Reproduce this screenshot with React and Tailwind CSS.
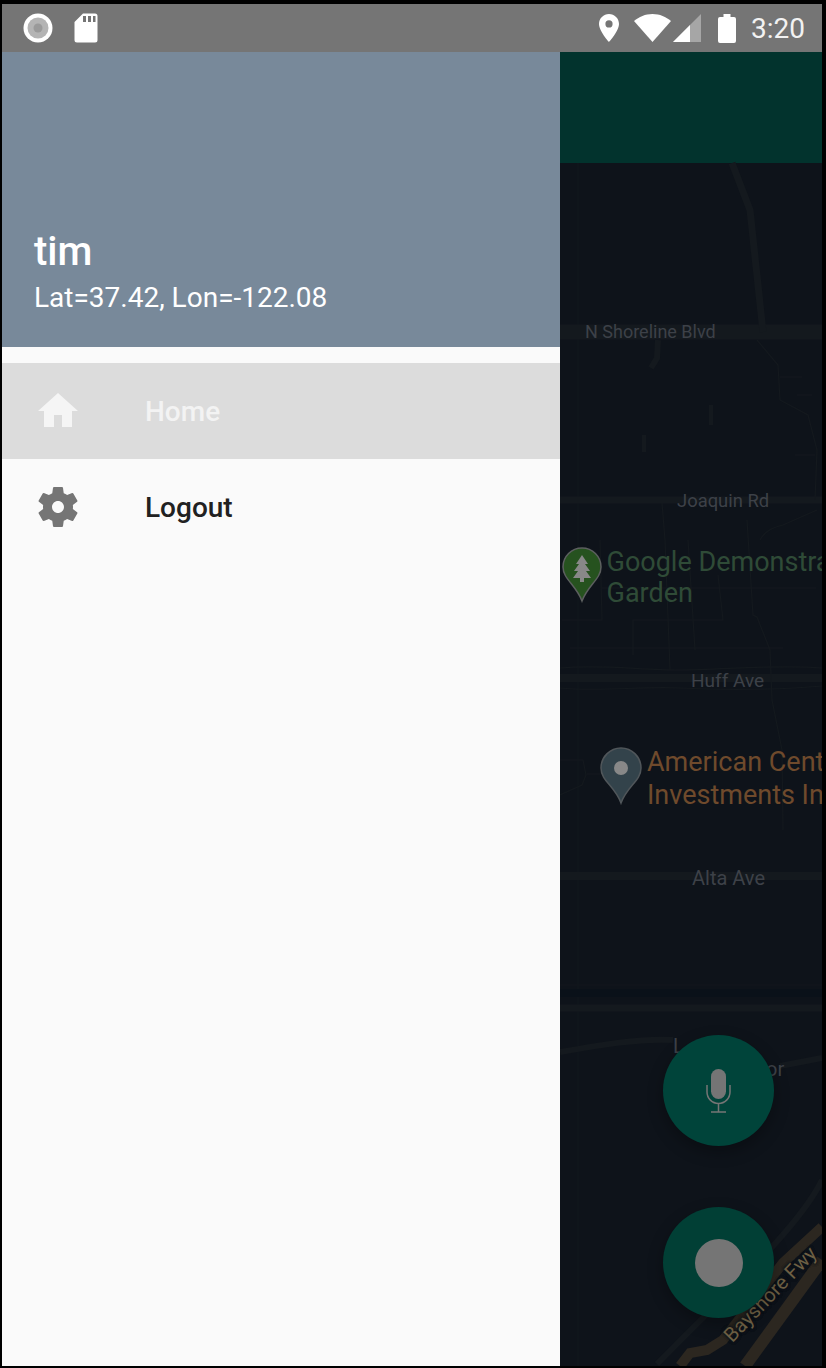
const HOME = "M10 20v-6h4v6h5v-8h3L12 3 2 12h3v8z"
const GEAR = "M19.43 12.98c.04-.32.07-.64.07-.98s-.03-.66-.07-.98l2.11-1.65c.19-.15.24-.42.12-.64l-2-3.46c-.12-.22-.39-.3-.61-.22l-2.49 1c-.52-.4-1.08-.73-1.69-.98l-.38-2.65C14.46 2.18 14.25 2 14 2h-4c-.25 0-.46.18-.49.42l-.38 2.65c-.61.25-1.17.59-1.69.98l-2.49-1c-.23-.09-.49 0-.61.22l-2 3.46c-.13.22-.07.49.12.64l2.11 1.65c-.04.32-.07.65-.07.98s.03.66.07.98l-2.11 1.65c-.19.15-.24.42-.12.64l2 3.46c.12.22.39.3.61.22l2.49-1c.52.4 1.08.73 1.69.98l.38 2.65c.03.24.24.42.49.42h4c.25 0 .46-.18.49-.42l.38-2.65c.61-.25 1.17-.59 1.69-.98l2.49 1c.23.09.49 0 .61-.22l2-3.46c.12-.22.07-.49-.12-.64l-2.11-1.65zM12 15c-1.66 0-3-1.34-3-3s1.34-3 3-3 3 1.34 3 3-1.34 3-3 3z"

const StatusBar = () => (
  <div className="h-12 shrink-0 bg-[#757575] flex items-center text-white">
    <svg width="30" height="30" viewBox="0 0 30 30" className="ml-[21px]">
      <circle cx="15" cy="15" r="14.5" fill="#fff" />
      <circle cx="15" cy="15" r="10.5" fill="#b4b4b4" />
      <circle cx="15" cy="15" r="4.5" fill="#9a9a9a" />
    </svg>
    <svg width="24" height="30" viewBox="0 0 24 30" className="ml-[21px]">
      <path d="M9 .5h12a2.500 2.500 0 0 1 2.500 2.500v24a2.500 2.500 0 0 1-2.500 2.500H3A2.500 2.500 0 0 1 .5 27V9z" fill="#fff" />
      <path d="M9 3h3v6H9zM14 3h3v6h-3zM19 3h2.500v6H19z" fill="#757575" />
    </svg>
    <svg width="20" height="28" viewBox="0 0 20 28" className="ml-[501px]">
      <path d="M10 0C4.500 0 0 4.400 0 10c0 7 10 18 10 18s10-11 10-18c0-5.600-4.500-10-10-10zm0 13.500a3.600 3.600 0 1 1 0-7.200 3.600 3.600 0 0 1 0 7.200z" fill="#fff" />
    </svg>
    <svg width="37" height="28" viewBox="0 0 37 28" className="ml-[15px]">
      <path d="M18.500 28 0 7C5 2.800 11.300 0 18.500 0S32 2.800 37 7z" fill="#fff" />
    </svg>
    <svg width="28" height="28" viewBox="0 0 28 28" className="ml-[2px]">
      <path d="M0 28 28 0v28z" fill="#a6a6a6" />
      <path d="M0 28 17 11v17z" fill="#fff" />
    </svg>
    <svg width="18" height="29" viewBox="0 0 18 29" className="ml-[17px]">
      <path d="M5.500 0h7v3H16a2 2 0 0 1 2 2v22a2 2 0 0 1-2 2H2a2 2 0 0 1-2-2V5a2 2 0 0 1 2-2h3.500z" fill="#fff" />
    </svg>
    <span className="ml-[15px] pt-0.5 text-[28px] leading-none font-['Roboto',sans-serif] text-[#f2f2f2]">3:20</span>
  </div>
)

const Drawer = () => (
  <div className="w-[558px] shrink-0 bg-[#fafafa] font-['Roboto',sans-serif]">
    <div className="h-[295px] bg-[#78899a] flex flex-col justify-end px-8 pb-[33px] text-white">
      <div className="text-[40px] leading-[44px] font-medium mb-[8px]">tim</div>
      <div className="text-[28px] leading-[32px]">Lat=37.42, Lon=-122.08</div>
    </div>
    <div className="pt-4">
      <div className="h-24 bg-[#dcdcdc] flex items-center">
        <svg width="48" height="48" viewBox="0 0 24 24" className="ml-8">
          <path d={HOME} fill="#f5f5f5" />
        </svg>
        <span className="ml-[63px] pt-0.5 text-[28px] font-medium text-[#f3f3f3]">Home</span>
      </div>
      <div className="h-24 flex items-center">
        <svg width="48" height="48" viewBox="0 0 24 24" className="ml-8">
          <path d={GEAR} fill="#757575" />
        </svg>
        <span className="ml-[63px] pt-0.5 text-[28px] font-medium text-[#212121]">Logout</span>
      </div>
    </div>
  </div>
)

// street labels, positions are the content of the map
const labels = [
  { t: "N Shoreline Blvd", c: "left-[25px] top-[271px] text-[18px]" },
  { t: "Joaquin Rd", c: "left-[117px] top-[440px] text-[18.4px]" },
  { t: "Huff Ave", c: "left-[131px] top-[619px] text-[19px]" },
  { t: "Alta Ave", c: "left-[132px] top-[816px] text-[20px]" },
]

const Map = () => (
  <div className="relative flex-1 overflow-hidden bg-[#0e131a] font-['Roboto',sans-serif]">
    <div className="h-[111px] bg-[#02332d]" />
    <svg className="absolute inset-0 w-full h-full" viewBox="560 52 262 1314" fill="none">
      <path d="M578 163V1366" stroke="#0f151b" strokeWidth="2" />
      <g stroke="#14191e">
        <path d="M560 332H822" strokeWidth="15" />
        <path d="M732 163 750 210 763 332" strokeWidth="7" />
        <path d="M658 340 657 358 651 368" strokeWidth="6" />
        <path d="M711 405V425M644 435V452" strokeWidth="4" />
        <path d="M560 500H822" strokeWidth="7" />
        <path d="M560 678H822" strokeWidth="8" />
        <path d="M560 876H822" strokeWidth="8" />
        <path d="M560 1008H822" strokeWidth="7" />
        <path d="M560 1052C600 1045 640 1038 673 1040M780 1066 822 1058" strokeWidth="6" />
        <path d="M822 1180C800 1225 740 1280 657 1364" strokeWidth="6" />
      </g>
      <path d="M560 993H822" stroke="#0a1119" strokeWidth="8" />
      <path d="M560 985H822" stroke="#12171c" strokeWidth="1" />
      <g stroke="#14191e" strokeWidth="1.200">
        <path d="M757 340 778 365 780 400 808 415 817 450 815 500" />
        <path d="M795 455H815M780 377H802M797 395H812" />
        <path d="M662 503 665 540 670 670M747 520 753 615 757 617 770 650 772 700 782 750 783 830" />
        <path d="M760 540C765 530 775 527 783 525L817 510" />
        <path d="M562 620H602L600 540M633 655V620H723L718 575" />
        <path d="M602 588H816M570 648H783M688 540 695 650" />
        <path d="M560 668C600 664 640 670 680 670S780 664 822 668M560 688C600 692 640 686 680 688S780 690 822 686" />
        <path d="M560 760H583L586 775 582 785 560 795M587 774H600" />
      </g>
      <g stroke="#2c2720" strokeWidth="10">
        <path d="M822 1227 783 1263 723 1340 707 1350 690 1353 680 1366" />
        <path d="M822 1260 745 1366" strokeWidth="12" />
      </g>
    </svg>

    {labels.map((l) => (
      <span key={l.t} className={`absolute whitespace-nowrap leading-none text-[#3d4148] ${l.c}`}>{l.t}</span>
    ))}

    <div className="absolute left-[46.5px] top-[495px] text-[27px] leading-[31px] text-[#2f4b37] whitespace-nowrap">
      Google Demonstration<br />Garden
    </div>
    <svg className="absolute left-[2px] top-[495px]" width="40" height="56" viewBox="0 0 40 56">
      <path d="M20 1C9.500 1 1 9.500 1 20c0 12 13 18 19 34 6-16 19-22 19-34C39 9.500 30.500 1 20 1z" fill="#26521f" stroke="#5c5f5f" strokeWidth="1.500" />
      <path d="M20 8 14 17h3l-5 7h4l-5 7h7v4h4v-4h7l-5-7h4l-5-7h3z" fill="#888" />
    </svg>

    <div className="absolute left-[87px] top-[694px] text-[27px] leading-[33px] text-[#6f4a2c] whitespace-nowrap">
      American Center<br />Investments Inc
    </div>
    <svg className="absolute left-[40px] top-[695px]" width="42" height="58" viewBox="0 0 42 58">
      <path d="M21 1C10 1 1 10 1 21c0 13 14 18 20 35 6-17 20-22 20-35C41 10 32 1 21 1z" fill="#33434b" stroke="#50565a" strokeWidth="1.500" />
      <circle cx="21" cy="21" r="7" fill="#888" />
    </svg>

    <span className="absolute left-[113px] top-[984px] text-[20px] leading-none text-[#3d4148]">L</span>
    <span className="absolute left-[206px] top-[1007px] text-[20px] leading-none text-[#3d4148]">or</span>
    <span className="absolute left-[210px] top-[1242px] -translate-x-1/2 -translate-y-1/2 rotate-[-46deg] text-[20px] leading-none text-[#6e6044] whitespace-nowrap [text-shadow:0_0_3px_#0e131a,0_0_3px_#0e131a,0_0_3px_#0e131a]">Bayshore Fwy</span>

    <div className="absolute left-[103px] top-[983px] w-[111px] h-[111px] rounded-full bg-[#00443a] shadow-[0_6px_16px_rgba(0,0,0,0.3)] flex items-center justify-center">
      <svg width="30" height="44" viewBox="0 0 30 44" fill="none">
        <rect x="7" y="0" width="15" height="30" rx="7.500" fill="#757575" />
        <path d="M3 16v7a11.500 11.500 0 0 0 23 0v-7M14.500 35v8M7 43h15" stroke="#757575" strokeWidth="1.500" />
      </svg>
    </div>
    <div className="absolute left-[103px] top-[1155px] w-[111px] h-[111px] rounded-full bg-[#013f35] shadow-[0_6px_16px_rgba(0,0,0,0.3)] flex items-center justify-center">
      <div className="w-12 h-12 rounded-full bg-[#757575]" />
    </div>
  </div>
)

const App = () => (
  <div className="w-[826px] h-[1368px] bg-black pt-1 pl-0.5 pr-1 pb-0.5 flex flex-col overflow-hidden">
    <StatusBar />
    <div className="flex flex-1 min-h-0">
      <Drawer />
      <Map />
    </div>
  </div>
)

export default App
